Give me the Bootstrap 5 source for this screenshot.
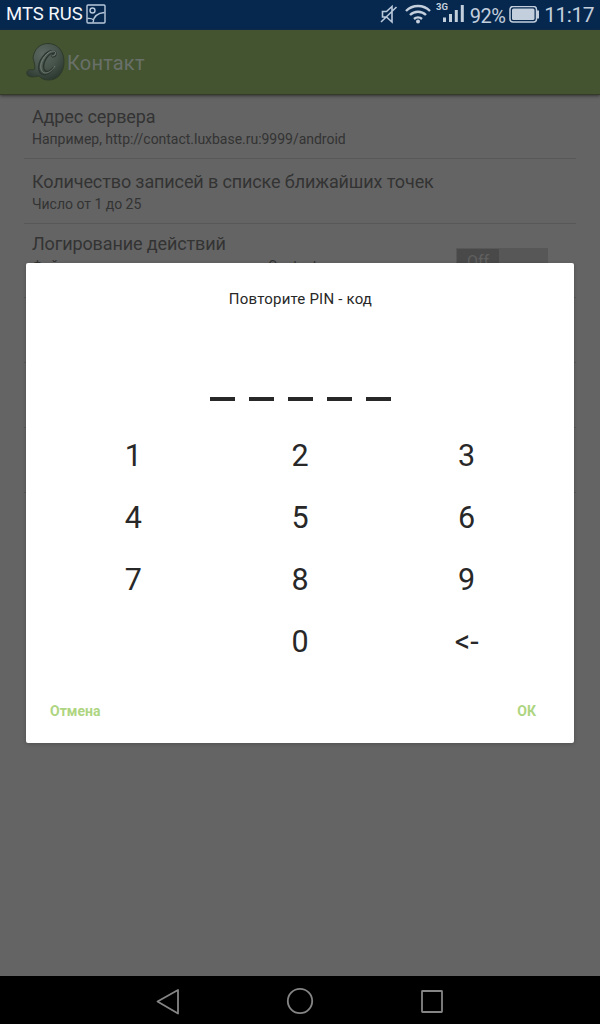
<!DOCTYPE html>
<html lang="ru">
<head>
<meta charset="utf-8">
<meta name="viewport" content="width=device-width, initial-scale=1">
<title>Контакт</title>
<link href="https://cdn.jsdelivr.net/npm/bootstrap@5.3.0/dist/css/bootstrap.min.css" rel="stylesheet">
<style>
body{font-family:Roboto,sans-serif;background:#646464;color:#333;height:1024px;overflow:hidden;line-height:1.2}
svg{display:block;flex:none}
.statusbar{height:30px;background:#07284e;color:#c3cfdd;padding:0 6px}
.carrier{font-size:18.5px;color:#f4f7fb;letter-spacing:0;margin-right:3px;line-height:22px;margin-top:-2px}
.raised{margin-bottom:3px}
.wifi{margin-left:7px;margin-right:5px}
.battery-pct{font-size:20px;letter-spacing:-.6px;margin-top:1px}
.clock{font-size:21px;letter-spacing:-.5px;margin-top:1px}
.topbar{height:65px;background:#445430;border-bottom:1px solid #343b2b;padding-left:24px;box-shadow:0 1px 3px #333}
.topbar h1{font-size:20px;font-weight:400;color:#69706a;letter-spacing:.2px;margin:1px 0 0 1px}
.prefs{margin:0 24px}
.pref{height:65px;border-bottom:1px solid #585858;padding:11px 8px 0}
.pref.first{height:64px;padding-top:10px}
.pref.tall{height:74px;padding-top:8px}
.pref-title{font-size:18px;line-height:24px;white-space:nowrap;letter-spacing:-.12px}
.pref-note{font-size:14px;line-height:20px;white-space:nowrap;letter-spacing:-.02px}
.tall .pref-title{line-height:25px;margin-top:-1px}
.tall .pref-note{letter-spacing:.01px}
.toggle{width:92px;height:28px;background:#575757;padding:1px;margin:16px 28px 0 0}
.toggle span{display:block;width:42px;height:26px;background:#494949;color:#606060;font-size:16px;line-height:26px;text-align:center}
.pin-dialog{top:263px;left:26px;width:548px;height:480px;border-radius:2px;background:#fff;color:#282828;padding:0 24px;box-shadow:0 1px 4px rgba(0,0,0,.2)}
.pin-title{font-size:15px;line-height:20px;margin:26px 0 0 1px;letter-spacing:.2px;font-weight:400}
.slots{gap:14px;margin-top:88px;height:4px}
.slots i{width:25px;background:#282828}
.keypad{margin-top:24px}
.keypad .key{height:62px;line-height:62px;font-size:30.5px;padding:0;border:0;color:#282828;border-radius:0}
.actions{margin-top:28px}
.actions .btn{font-size:14px;font-weight:700;line-height:20px;padding:0;border:0;color:#aed581}
.actions .ok-btn{margin-right:14px}
.navkeys{height:48px;background:#000}
</style>
<script src="https://cdn.jsdelivr.net/npm/bootstrap@5.3.0/dist/js/bootstrap.bundle.min.js"></script>
</head>
<body class="d-flex flex-column position-relative">
<header class="statusbar d-flex align-items-center flex-shrink-0">
  <span class="carrier">MTS RUS</span>
  <svg class="raised" width="20" height="20" viewBox="0 0 20 20" fill="none" stroke="#b9c9dc" stroke-width="1.4"><rect x="1" y="1" width="18" height="18" rx="1"/><circle cx="6.500" cy="6.500" r="2.500"/><path d="M7 18.500C7.500 13 11 9 18.500 8.500M1.500 14.500Q5 14 8 16"/></svg>
  <div class="ms-auto d-flex align-items-center">
    <svg class="raised" width="18" height="20" viewBox="0 0 18 20" fill="none" stroke="#b9c9dc" stroke-width="1.6"><path d="M2.500 7.500h4l5.500-5v15.500l-5.500-5h-4zM1 18L16.500 3"/></svg>
    <svg class="raised wifi" width="26" height="20" viewBox="0 0 26 20" fill="none" stroke="#c3cfdd" stroke-width="2.400"><path d="M1 7a17 17 0 0 1 24 0M5 11a11.500 11.500 0 0 1 16 0M9 15a6 6 0 0 1 8 0"/><circle cx="13" cy="17.500" r="2" fill="#c3cfdd" stroke="none"/></svg>
    <svg width="30" height="30" viewBox="0 -3 30 30" fill="#c3cfdd"><text x="0" y="6.500" font-family="Roboto,sans-serif" font-weight="700" font-size="9.5">3G</text><path d="M7 14.500h3V19H7zM13 11h3v8h-3zM18.800 7h3v12h-3zM24.800 2h3v17h-3z"/></svg>
    <span class="battery-pct ms-1">92%</span>
    <svg class="ms-1" width="31" height="18" viewBox="0 0 31 18"><rect x="1" y=".5" width="26.500" height="15.500" rx="3" fill="none" stroke="#c3cfdd" stroke-width="1.500"/><rect x="3" y="2.500" width="22.500" height="11.500" rx="1.500" fill="#c3cfdd"/><path d="M28 4.500h2v8H28" fill="#c3cfdd"/></svg>
    <span class="clock ms-1">11:17</span>
  </div>
</header>
<nav class="topbar d-flex align-items-center flex-shrink-0 position-relative">
  <svg width="42" height="40" viewBox="0 0 42 40"><defs><radialGradient id="orb" cx=".42" cy=".28" r=".75"><stop offset="0" stop-color="#5a665f"/><stop offset=".55" stop-color="#46544c"/><stop offset="1" stop-color="#2b3830"/></radialGradient></defs><path d="M9 16C10 7 16 1.500 24 1.500c10 0 16 8 16 18 0 11-6 18.500-15 18.500-6 0-8-2-10-4-4 1-11 2-12-2-1-4 3-5 6-4 3 0 2-5 0-12z" fill="url(#orb)" stroke="#2f3b2a"/><path d="M28 15c5 0 5-5 2-6-7-2-17 10-15 19 2 8 11 5 15-3M28 15c0-2 1-3 2-4-6 0-12 10-10 16 2 5 7 2 10-2" fill="none" stroke="#2d3731" stroke-width="1.500"/><path d="M28 14c4 0 5-4 2-5-6-1-15 10-13 18 2 7 10 4 14-3" fill="none" stroke="#717d74" stroke-width="1"/></svg>
  <h1>Контакт</h1>
</nav>
<main class="flex-grow-1 overflow-hidden">
  <div class="prefs">
    <div class="pref first"><div class="pref-title">Адрес сервера</div><div class="pref-note">Например, http://contact.luxbase.ru:9999/android</div></div>
    <div class="pref"><div class="pref-title">Количество записей в списке ближайших точек</div><div class="pref-note">Число от 1 до 25</div></div>
    <div class="pref tall d-flex justify-content-between pe-0"><div><div class="pref-title">Логирование действий</div><div class="pref-note">Файл сохраняется на карте в папке Contact</div></div><div class="toggle"><span>Off</span></div></div>
    <div class="pref"></div><div class="pref"></div><div class="pref"></div>
  </div>
</main>
<footer class="navkeys flex-shrink-0">
  <svg class="mx-auto" width="290" height="48" viewBox="0 0 290 48" fill="none" stroke="#858585" stroke-width="1.800" stroke-linejoin="round"><path d="M23 14v23.500L2.500 25.500z"/><circle cx="145" cy="25" r="12.200"/><rect x="267" y="15" width="20" height="21" rx=".5"/></svg>
</footer>
<section class="pin-dialog position-absolute d-flex flex-column" role="dialog">
  <h2 class="pin-title text-center">Повторите PIN - код</h2>
  <div class="slots d-flex justify-content-center"><i></i><i></i><i></i><i></i><i></i></div>
  <div class="keypad row g-0 text-center">
    <button class="key btn col-4">1</button><button class="key btn col-4">2</button><button class="key btn col-4">3</button>
    <button class="key btn col-4">4</button><button class="key btn col-4">5</button><button class="key btn col-4">6</button>
    <button class="key btn col-4">7</button><button class="key btn col-4">8</button><button class="key btn col-4">9</button>
    <button class="key btn col-4 offset-4">0</button><button class="key btn col-4">&lt;-</button>
  </div>
  <div class="actions d-flex justify-content-between"><button class="btn">Отмена</button><button class="btn ok-btn">ОК</button></div>
</section>
</body>
</html>
